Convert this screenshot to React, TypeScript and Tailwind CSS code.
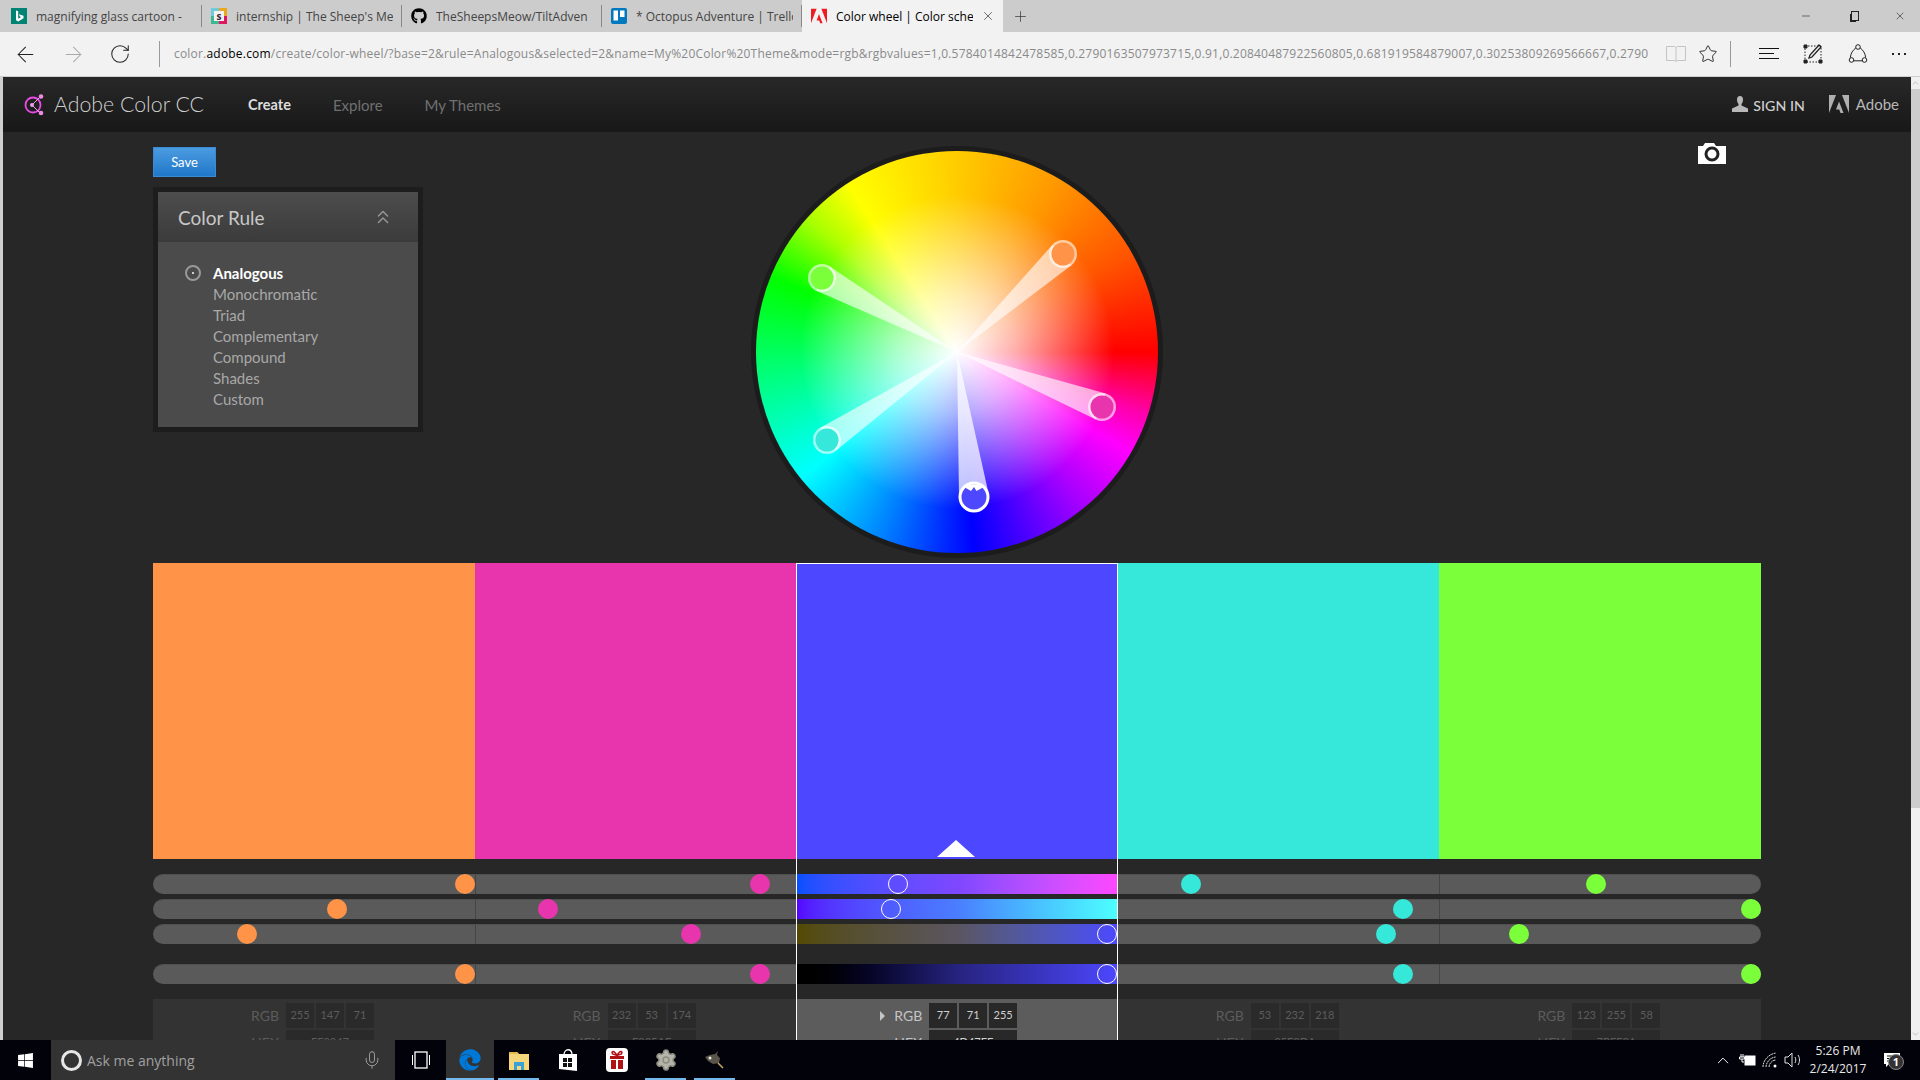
import { FaEdge, FaGithub, FaWindows } from "react-icons/fa"
import { ArrowLeft, ArrowRight, ChevronUp, ChevronDown, ChevronsUp, RotateCw, Star, Plus, X, Minus, Mic, Settings } from "lucide-react"

type Swatch = {
  hex: string
  code: string
  rgb: number[]
  thumbs: number[]
  bg: string
}

const swatches: Swatch[] = [
  { hex: "#ff9347", code: "FF9347", rgb: [255, 147, 71], thumbs: [97, 57.2, 29.2, 97], bg: "bg-[#ff9347]" },
  { hex: "#e835ae", code: "E835AE", rgb: [232, 53, 174], thumbs: [88.6, 22.7, 67.2, 88.6], bg: "bg-[#e835ae]" },
  { hex: "#4d47ff", code: "4D47FF", rgb: [77, 71, 255], thumbs: [31.7, 29.5, 96.7, 96.7], bg: "bg-[#4d47ff]" },
  { hex: "#35e8da", code: "35E8DA", rgb: [53, 232, 218], thumbs: [22.7, 88.6, 83.3, 88.6], bg: "bg-[#35e8da]" },
  { hex: "#7bff3a", code: "7BFF3A", rgb: [123, 255, 58], thumbs: [48.5, 97, 24.6, 97], bg: "bg-[#7bff3a]" },
]

const selectedGradients = [
  "bg-linear-to-r from-[#0050ff] via-[#7d47ff] to-[#ff47ff]",
  "bg-linear-to-r from-[#5500ff] via-[#4a7dff] to-[#4dffff]",
  "bg-linear-to-r from-[#544a00] via-[#5b5560] to-[#4d47ff]",
  "bg-linear-to-r from-[#000000] via-[#26237f] to-[#4d47ff]",
]

const rules = ["Analogous", "Monochromatic", "Triad", "Complementary", "Compound", "Shades", "Custom"]

const handles = [
  { x: 106, y: -98, color: "#ff9347" },
  { x: 145, y: 55, color: "#e835ae" },
  { x: -130, y: 88, color: "#35e8da" },
  { x: -135, y: -74, color: "#7bff3a" },
]

function BingIcon() {
  return (
    <svg viewBox="0 0 16 16" className="h-4 w-4">
      <rect width="16" height="16" fill="#008373" />
      <path d="M5 2.5l2.2.8v7.5l3-1.7-1.4-.7-.9-2.2 4.6 1.6v2.4L7.2 13.5 5 12.3z" fill="#fff" />
    </svg>
  )
}

function SlackIcon() {
  return (
    <svg viewBox="0 0 16 16" className="h-4 w-4">
      <rect width="8" height="8" fill="#6ecadc" />
      <rect x="8" width="8" height="8" fill="#e9a820" />
      <rect y="8" width="8" height="8" fill="#3eb890" />
      <rect x="8" y="8" width="8" height="8" fill="#e01563" />
      <rect x="3" y="3" width="10" height="10" fill="#f3f3f3" />
      <text x="8" y="11.5" textAnchor="middle" fontSize="10" fontWeight="700" fill="#3d2a3c" fontFamily="Open Sans">s</text>
    </svg>
  )
}

function TrelloIcon() {
  return (
    <svg viewBox="0 0 16 16" className="h-4 w-4">
      <rect width="16" height="16" rx="2" fill="#0079bf" />
      <rect x="2.5" y="2.5" width="4.5" height="10" fill="#fff" />
      <rect x="9" y="2.5" width="4.5" height="6.5" fill="#fff" />
    </svg>
  )
}

function AdobeIcon({ fill, className }: { fill: string; className: string }) {
  return (
    <svg viewBox="0 0 20 18" className={className} fill={fill}>
      <path d="M0 0h7L0 18z" />
      <path d="M13 0h7v18z" />
      <path d="M10 6.5l4.5 11.5h-3l-1.3-3.4H7z" />
    </svg>
  )
}

function Tab({ icon, title, titleWidth }: { icon: React.ReactNode; title: string; titleWidth: string }) {
  return (
    <div className="flex h-8 w-[200px] items-center pl-[9px]">
      {icon}
      <span className={`ml-[9px] overflow-hidden whitespace-nowrap pt-px text-[12px] text-[#444] ${titleWidth}`}>{title}</span>
      <span className="ml-auto h-[22px] w-px bg-[#888]" />
    </div>
  )
}

function TabStrip() {
  return (
    <div className="flex h-8 shrink-0 items-center bg-[#cccccc] pl-[2px] text-[#222]">
      <Tab icon={<BingIcon />} title="magnifying glass cartoon -" titleWidth="w-[157px]" />
      <Tab icon={<SlackIcon />} title="internship | The Sheep's Me" titleWidth="w-[157px]" />
      <Tab icon={<FaGithub className="h-4 w-4 text-black" />} title="TheSheepsMeow/TiltAdven" titleWidth="w-[157px]" />
      <Tab icon={<TrelloIcon />} title="* Octopus Adventure | Trello" titleWidth="w-[157px]" />
      <div className="flex h-8 w-[201px] items-center bg-[#f2f2f2] pl-[9px]">
        <AdobeIcon fill="#ed1c24" className="h-4 w-4" />
        <span className="ml-[9px] w-[137px] overflow-hidden whitespace-nowrap pt-px text-[12px] text-black">Color wheel | Color scheme</span>
        <X className="ml-[8px] h-[14px] w-[14px] text-[#333]" strokeWidth={1.2} />
      </div>
      <Plus className="ml-[9px] h-[17px] w-[17px] text-[#333]" strokeWidth={1} />
      <div className="ml-auto flex items-center">
        <Minus className="h-3 w-3 text-[#222]" strokeWidth={1.2} />
        <div className="ml-[37px] flex h-3 w-3 items-center justify-center">
          <div className="h-[10px] w-2 border border-[#222] bg-[#ccc] shadow-[-2px_2px_0_-1px_#222]" />
        </div>
        <X className="ml-[33px] mr-[14px] h-3 w-3 text-[#222]" strokeWidth={1.2} />
      </div>
    </div>
  )
}

function AddressBar() {
  return (
    <div className="flex h-[45px] shrink-0 items-center border-b border-[#cfcfcf] bg-[#f2f2f2]">
      <ArrowLeft className="ml-[13px] h-[25px] w-[25px] text-[#222]" strokeWidth={1} />
      <ArrowRight className="ml-[23px] h-[25px] w-[25px] text-[#aaa]" strokeWidth={1} />
      <RotateCw className="ml-[23px] h-[22px] w-[22px] text-[#222]" strokeWidth={1.1} />
      <span className="ml-[28px] h-[26px] w-px bg-[#999]" />
      <div className="ml-[14px] w-[1474px] overflow-hidden whitespace-nowrap text-[12px] tracking-[0.2px] text-[#8a8a8a]">
        color.<span className="text-black">adobe.com</span>
        /create/color-wheel/?base=2&amp;rule=Analogous&amp;selected=2&amp;name=My%20Color%20Theme&amp;mode=rgb&amp;rgbvalues=1,0.5784014842478585,0.2790163507973715,0.91,0.20840487922560805,0.681919584879007,0.30253809269566667,0.2790163507973715,1
      </div>
      <svg viewBox="0 0 20 18" className="ml-[18px] h-[18px] w-5" fill="none" stroke="#c4c4c4" strokeWidth="1">
        <path d="M.5 1.5h8l1.5 1 1.5-1h8v14h-8l-1.5 1-1.5-1h-8zM10 2.5v14" />
      </svg>
      <Star className="ml-3 h-5 w-5 text-[#222]" strokeWidth={1.1} />
      <span className="ml-3 h-[26px] w-px bg-[#999]" />
      <svg viewBox="0 0 20 14" className="ml-7 h-[14px] w-5" fill="none" stroke="#111" strokeWidth="1">
        <path d="M0 1.5h20M0 6.5h15M0 11.5h20" />
      </svg>
      <svg viewBox="0 0 20 20" className="ml-6 h-5 w-5" fill="none" stroke="#222" strokeWidth="1">
        <path d="M2 2h16v16H2z" strokeDasharray="1.5 1.5" />
        <path d="M1 1h3v3H1zM1 16h3v3H1zM16 16h3v3h-3z" fill="#222" />
        <path d="M6 14l1-3 9-10 2 2-9 10z" strokeWidth="1.3" />
      </svg>
      <svg viewBox="0 0 20 20" className="ml-[25px] h-5 w-5" fill="none" stroke="#222" strokeWidth="1">
        <circle cx="10" cy="3" r="2.3" />
        <circle cx="3.5" cy="16" r="2.3" />
        <circle cx="16.5" cy="16" r="2.3" />
        <path d="M7.8 4C5 6 2.8 9 2.3 13.7M12.2 4C15 6 17.2 9 17.7 13.7M5.8 16.8h8.4" />
      </svg>
      <div className="ml-6 flex gap-[4px]">
        <span className="h-[2px] w-[2px] bg-[#222]" />
        <span className="h-[2px] w-[2px] bg-[#222]" />
        <span className="h-[2px] w-[2px] bg-[#222]" />
      </div>
    </div>
  )
}

function SiteHeader() {
  return (
    <header className="flex h-[55px] shrink-0 items-center bg-linear-to-b from-[#282828] to-[#181818] pl-5 pr-[12px]">
      <svg viewBox="0 0 22 24" className="h-6 w-[22px]" fill="none">
        <circle cx="10" cy="12" r="7.5" stroke="#e94be8" strokeWidth="1.8" />
        <circle cx="9" cy="12" r="2" fill="#e9a0e8" />
        <path d="M9 12l8-8M9 12l8 8" stroke="#e9a0e8" strokeWidth="1" />
        <circle cx="18" cy="3.5" r="2.3" fill="#f08ae8" />
        <circle cx="18" cy="20" r="2.3" fill="#f08ae8" />
      </svg>
      <span className="ml-[9px] text-[21.3px] font-light text-[#cfcfcf]">Adobe Color CC</span>
      <nav className="ml-[44px] flex gap-[42px] pt-[2px] text-[15px]">
        <span className="text-[14.5px] font-bold text-[#dddddd]">Create</span>
        <span className="text-[#707070]">Explore</span>
        <span className="text-[#707070]">My Themes</span>
      </nav>
      <div className="ml-auto flex items-center text-[15px] text-[#b8b8b8]">
        <svg viewBox="0 0 16 16" className="h-4 w-4" fill="#b8b8b8">
          <path d="M5 3.5a3 3.5 0 0 1 6 0c0 2-.8 3.5-1.5 4.5v1.500L16 12.500V16H0v-3.500l6.500-3V8C5.800 7 5 5.500 5 3.500z" />
        </svg>
        <span className="ml-[5px] pt-[2px] text-[14.2px] font-medium text-[#cfcfcf]">SIGN IN</span>
        <AdobeIcon fill="#b0b0b0" className="ml-6 h-[18px] w-5" />
        <span className="ml-[7px]">Adobe</span>
      </div>
    </header>
  )
}

function ColorRule() {
  return (
    <div className="w-[270px] border-[5px] border-[#1d1d1d] bg-[#4b4b4b]">
      <div className="flex h-[50px] items-center justify-between bg-linear-to-b from-[#4d4d4d] to-[#3b3b3b] pl-5 pr-[24px]">
        <span className="pt-[2px] text-[19px] text-[#c8c8c8]">Color Rule</span>
        <ChevronsUp className="h-[22px] w-[22px] text-[#999]" strokeWidth={1.5} />
      </div>
      <ul className="flex h-[185px] flex-col pl-[55px] pt-[21px] text-[15px] leading-[21px] text-[#a8a8a8]">
        {rules.map((rule, i) => (
          <li key={rule} className={i === 0 ? "relative font-bold text-white" : ""}>
            {rule}
            {i === 0 && (
              <span className="absolute -left-[28px] top-[2px] flex h-4 w-4 items-center justify-center rounded-full border-2 border-[#999]">
                <span className="h-[2px] w-[2px] bg-[#ccc]" />
              </span>
            )}
          </li>
        ))}
      </ul>
    </div>
  )
}

function wedge(x: number, y: number, r: number) {
  const d = Math.hypot(x, y)
  const base = Math.atan2(y, x)
  const spread = Math.asin(r / d)
  const len = Math.sqrt(d * d - r * r)
  const a = [len * Math.cos(base - spread), len * Math.sin(base - spread)]
  const b = [len * Math.cos(base + spread), len * Math.sin(base + spread)]
  return `M0 0L${a[0]} ${a[1]}L${b[0]} ${b[1]}Z`
}

function Wheel() {
  return (
    <div className="relative h-[412px] w-[412px] rounded-full bg-[#1c1c1c] p-[5px]">
      <div className="h-full w-full rounded-full bg-[conic-gradient(#ffcc00_0deg,#ff9900_30deg,#ff5500_60deg,#ff0000_90deg,#ff00aa_108deg,#ff00ff_120deg,#aa00ff_140deg,#0000ff_175deg,#0080ff_202deg,#00ffff_231deg,#00ff80_262deg,#00ff00_292deg,#aaff00_312deg,#ffff00_327deg,#ffcc00_360deg)]">
        <div className="h-full w-full rounded-full bg-[radial-gradient(circle_closest-side,#ffffff_0%,#ffffffaa_30%,#ffffff00_78%)]" />
      </div>
      <svg viewBox="-206 -206 412 412" className="absolute inset-0 h-full w-full">
        {handles.map((h) => (
          <g key={h.color}>
            <path d={wedge(h.x, h.y, 14)} fill="#fff" fillOpacity="0.62" />
            <circle cx={h.x} cy={h.y} r="14" fill="#fff" fillOpacity="0.62" />
            <circle cx={h.x} cy={h.y} r="11.5" fill={h.color} />
          </g>
        ))}
        <path d={wedge(17, 145, 15)} fill="#fff" fillOpacity="0.72" />
        <circle cx="17" cy="145" r="14" fill="#4d47ff" stroke="#fff" strokeWidth="3" />
        <path d="M8 135.500A14 14 0 0 1 26 135.500L19.500 139L17 135L14 139Z" fill="#fff" />
      </svg>
    </div>
  )
}

function CameraIcon() {
  return (
    <svg viewBox="0 0 30 22" className="h-[22px] w-[30px]">
      <path d="M1 4h5l2-3h9l2 3h10v18H1z" fill="#fff" />
      <circle cx="15" cy="12" r="6" fill="#fff" stroke="#222" strokeWidth="3" />
    </svg>
  )
}

function ColorColumn({ swatch, index }: { swatch: Swatch; index: number }) {
  const selected = index === 2
  return (
    <div className="relative flex flex-col">
      <div className={`relative h-[296px] ${swatch.bg}`}>
        {selected && (
          <svg viewBox="0 0 38 17" className="absolute bottom-[2px] left-[141px] h-[17px] w-[38px]">
            <path d="M19 0l19 17H0z" fill="#fff" />
          </svg>
        )}
      </div>
      <div className="mt-[15px] flex flex-col">
        {swatch.thumbs.map((value, row) => (
          <div
            key={row}
            className={`relative h-5 ${row === 3 ? "mt-5" : row > 0 ? "mt-[5px]" : ""} ${
              selected ? selectedGradients[row] : "border-t border-[#505050] bg-[#5a5a5a]"
            } ${index === 0 ? "rounded-l-full" : ""} ${index === 4 ? "rounded-r-full" : ""} ${
              index === 1 || index === 4 ? "border-l border-l-[#454545]" : ""
            }`}
          >
            <span
              className={`absolute h-5 w-5 -translate-x-1/2 rounded-full ${selected ? "top-0 border border-white" : `-top-px ${swatch.bg}`}`}
              style={{ left: `${value}%` }}
            />
          </div>
        ))}
      </div>
      <div className={`mt-[15px] flex h-[60px] flex-col gap-[2px] pt-1 ${selected ? "bg-[#5c5c5c]" : "bg-[#333333]"}`}>
        <div className="flex h-[25px]">
          <div className={`flex w-[126px] items-center justify-end gap-[9px] text-[14px] ${selected ? "text-[#c4c4c4]" : "text-[#5c5c5c]"}`}>
            {selected && <span className="h-0 w-0 border-y-[5px] border-l-[5px] border-y-transparent border-l-[#c4c4c4]" />}
            RGB
          </div>
          <div className="ml-[7px] flex gap-[2px]">
            {swatch.rgb.map((n, i) => (
              <span
                key={i}
                className={`flex w-[28px] items-center justify-center text-[11px] ${
                  selected ? "bg-[#282828] text-[#d0d0d0]" : "bg-[#2a2a2a] text-[#5c5c5c]"
                }`}
              >
                {n}
              </span>
            ))}
          </div>
        </div>
        <div className="flex h-[25px]">
          <div className={`flex w-[126px] items-center justify-end text-[14px] ${selected ? "text-[#c4c4c4]" : "text-[#5c5c5c]"}`}>HEX</div>
          <span
            className={`ml-[7px] flex w-[88px] items-center justify-center text-[11px] ${
              selected ? "bg-[#282828] text-[#d0d0d0]" : "bg-[#2a2a2a] text-[#5c5c5c]"
            }`}
          >
            {swatch.code}
          </span>
        </div>
      </div>
      {selected && <div className="pointer-events-none absolute inset-0 border border-b-0 border-white" />}
    </div>
  )
}

function Scrollbar() {
  return (
    <div className="flex w-[9px] shrink-0 flex-col items-center bg-[#f0f0f0]">
      <ChevronUp className="h-3 w-[9px] text-[#999]" strokeWidth={1.5} />
      <div className="h-[719px] w-full bg-[#cdcdcd]" />
      <div className="flex-1" />
      <ChevronDown className="h-3 w-[9px] text-[#999]" strokeWidth={1.5} />
    </div>
  )
}

function TaskIcon({ children, bar, active, wide }: { children: React.ReactNode; bar?: boolean; active?: boolean; wide?: boolean }) {
  return (
    <div className={`relative flex h-10 items-center justify-center ${wide ? "w-12" : "w-[49px]"} ${active ? "bg-[#333]" : ""}`}>
      {children}
      {bar && <span className={`absolute bottom-0 h-[2px] bg-[#76b9ed] ${active ? "inset-x-0" : "inset-x-[4px]"}`} />}
    </div>
  )
}

function Taskbar() {
  return (
    <div className="flex h-10 shrink-0 items-center bg-[#02020a] text-white">
      <div className="flex h-10 w-[51px] items-center justify-center">
        <FaWindows className="h-[17px] w-[17px]" />
      </div>
      <div className="flex h-10 w-[344px] items-center bg-[#333333] pl-[10px] pr-[13px]">
        <span className="h-[21px] w-[21px] rounded-full border-[3px] border-[#e6e6e6]" />
        <span className="ml-[5px] text-[14px] text-[#a0a0a0]">Ask me anything</span>
        <Mic className="ml-auto h-[20px] w-[20px] text-[#999]" strokeWidth={1.2} />
      </div>
      <div className="flex h-10 w-[51px] items-center justify-center">
        <svg viewBox="0 0 20 18" className="h-[18px] w-5" fill="none" stroke="#fff">
          <rect x="4" y="1" width="12" height="16" strokeWidth="1.3" />
          <path d="M1.5 4v10M18.5 4v10" strokeWidth="1" />
        </svg>
      </div>
      <TaskIcon bar active wide>
        <FaEdge className="h-[22px] w-[22px] text-[#0078d7]" />
      </TaskIcon>
      <TaskIcon bar>
        <svg viewBox="0 0 22 22" className="h-[22px] w-[22px]">
          <path d="M1 3h8l2 2h10v16H1z" fill="#f6d67a" />
          <path d="M1 3h8l2 2H1z" fill="#e6b94c" />
          <path d="M6 21v-8h10v8h-3v-4H9v4z" fill="#3aa0d8" />
        </svg>
      </TaskIcon>
      <TaskIcon>
        <svg viewBox="0 0 20 24" className="h-6 w-5">
          <path d="M1 6h18v17L1 21z" fill="#fff" />
          <path d="M6 7c0-7 8-7 8 0" stroke="#fff" strokeWidth="1.3" fill="none" />
          <path d="M5 10h4v4H5zM10 10h4v4h-4zM5 15h4v4H5zM10 15h4v4h-4z" fill="#111" />
        </svg>
      </TaskIcon>
      <TaskIcon>
        <svg viewBox="0 0 24 24" className="h-6 w-6">
          <rect x="1" width="22" height="24" rx="4" fill="#fff" />
          <path d="M5 8h14v3H5zM6 12h5v9H6zM13 12h5v9h-5z" fill="#b01116" />
          <path d="M12 7.500C9 2 6 3 7.500 6zM12 7.500C15 2 18 3 16.500 6z" fill="none" stroke="#b01116" strokeWidth="1.5" />
        </svg>
      </TaskIcon>
      <TaskIcon bar>
        <Settings className="h-6 w-6 fill-[#b4b4a8] text-[#8c8c80]" strokeWidth={1.5} />
      </TaskIcon>
      <TaskIcon bar>
        <svg viewBox="0 0 22 20" className="h-5 w-[22px]">
          <path d="M1 7l5-2 5-1 3-3-1 4 3 3-1 5-6 1-5-3z" fill="#5a5548" />
          <circle cx="6" cy="8" r="1.5" fill="#e8e8e8" />
          <path d="M14 13l5 5" stroke="#c8a868" strokeWidth="1.5" />
        </svg>
      </TaskIcon>
      <div className="ml-auto flex h-10 items-center">
        <ChevronUp className="h-[19px] w-6 text-white" strokeWidth={1.2} />
        <svg viewBox="0 0 18 14" className="ml-[3px] h-[14px] w-[18px]" fill="none" stroke="#fff" strokeWidth="1">
          <path d="M3 1v3M5 1v3M1.5 4h5v2h-5zM4 6v3h2" />
          <rect x="7" y="3" width="10" height="9" fill="#fff" />
        </svg>
        <svg viewBox="0 0 16 16" className="ml-[6px] h-4 w-4" fill="none" stroke="#d8d8d8" strokeWidth="1">
          <path d="M1 15C1 8 7 2 14 1M4 15c0-5 5-10 10-10M7 15c0-3 3-7 7-7" strokeDasharray="2 .6" />
          <circle cx="13" cy="14" r="1.5" fill="#fff" stroke="none" />
        </svg>
        <svg viewBox="0 0 18 16" className="ml-[6px] h-4 w-[18px]" fill="none" stroke="#e0e0e0" strokeWidth="1">
          <path d="M1 5h3l4-4v14l-4-4H1zM11 5c1 2 1 4 0 6M14 3c2 3 2 7 0 10" />
        </svg>
        <div className="ml-[3px] flex w-[66px] flex-col items-center text-[12px] leading-[18px] text-[#e8e8e8]">
          <span>5:26 PM</span>
          <span>2/24/2017</span>
        </div>
        <div className="relative flex w-[49px] items-center justify-center">
          <svg viewBox="0 0 16 14" className="mr-2 h-[14px] w-4">
            <path d="M0 0h16v11H5l-3 3v-3H0z" fill="#fff" />
            <path d="M3 3h10M3 5.5h10M3 8h7" stroke="#111" />
          </svg>
          <span className="absolute left-[17px] top-[1px] flex h-4 w-4 items-center justify-center rounded-full border border-[#888] bg-[#333] text-[11px] font-bold text-white">
            1
          </span>
        </div>
      </div>
    </div>
  )
}

export default function App() {
  return (
    <div className="flex h-screen w-full flex-col overflow-hidden bg-[#272727] [font-family:'Open_Sans',sans-serif]">
      <TabStrip />
      <AddressBar />
      <div className="flex min-h-0 flex-1 overflow-hidden">
        <div className="w-[3px] shrink-0 bg-[#cfcfcf]" />
        <div className="flex min-w-0 flex-1 flex-col [font-family:Lato,sans-serif]">
          <SiteHeader />
          <main className="mx-auto w-[1608px]">
            <div className="grid h-[431px] grid-cols-[1fr_412px_1fr]">
              <div className="flex flex-col items-start pt-[15px]">
                <button className="h-[30px] w-[63px] border border-[#3a8ad4] bg-linear-to-b from-[#4a9be0] to-[#1f78c9] pt-px text-[13px] text-white">
                  Save
                </button>
                <div className="mt-[10px]">
                  <ColorRule />
                </div>
              </div>
              <div className="pt-[14px]">
                <Wheel />
              </div>
              <div className="flex justify-end pr-[34px] pt-[10px]">
                <CameraIcon />
              </div>
            </div>
            <div className="grid grid-cols-5">
              {swatches.map((swatch, i) => (
                <ColorColumn key={swatch.code} swatch={swatch} index={i} />
              ))}
            </div>
          </main>
        </div>
        <Scrollbar />
      </div>
      <Taskbar />
    </div>
  )
}
